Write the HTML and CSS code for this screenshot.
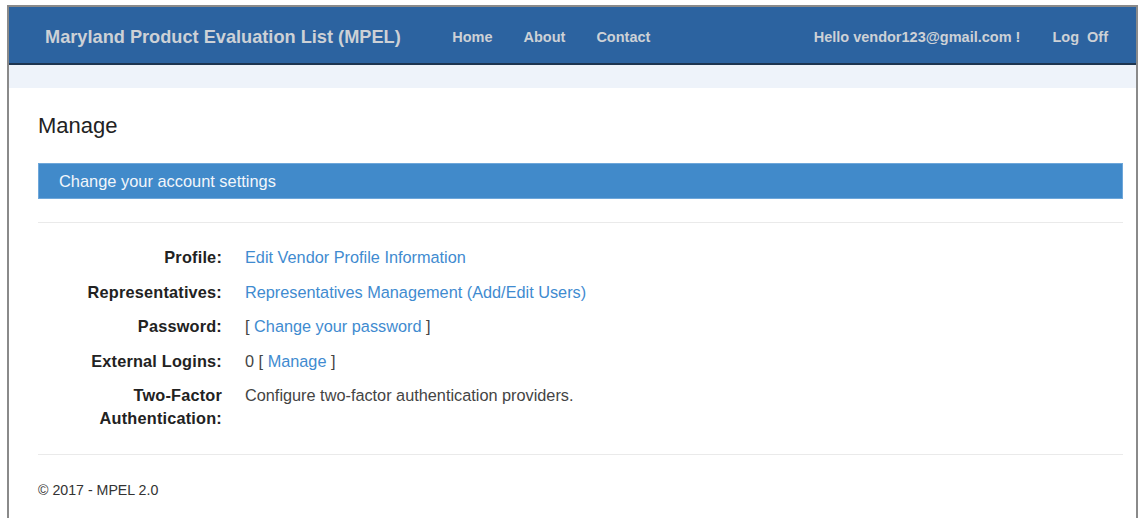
FILE: index.html
```html
<!DOCTYPE html>
<html lang="en">
<head>
<meta charset="utf-8">
<title>Manage - Maryland Product Evaluation List (MPEL)</title>
<link rel="stylesheet" href="styles.css">
</head>
<body>
<div class="window">
  <header class="navbar">
    <a class="brand" href="#">Maryland Product Evaluation List (MPEL)</a>
    <nav class="nav-main">
      <a href="#">Home</a>
      <a href="#">About</a>
      <a href="#">Contact</a>
    </nav>
    <nav class="nav-user">
      <a href="#">Hello vendor123@gmail.com !</a>
      <a href="#">Log&nbsp;&nbsp;Off</a>
    </nav>
  </header>
  <div class="subbar"></div>

  <main class="content">
    <h2 class="page-title">Manage</h2>
    <div class="banner">Change your account settings</div>
    <hr class="rule">

    <dl class="settings">
      <dt>Profile:</dt>
      <dd><a href="#">Edit Vendor Profile Information</a></dd>

      <dt>Representatives:</dt>
      <dd><a href="#">Representatives Management (Add/Edit Users)</a></dd>

      <dt>Password:</dt>
      <dd>[ <a href="#">Change your password</a> ]</dd>

      <dt>External Logins:</dt>
      <dd>0 [ <a href="#">Manage</a> ]</dd>

      <dt>Two-Factor<br>Authentication:</dt>
      <dd>Configure two-factor authentication providers.</dd>
    </dl>

    <hr class="rule">
    <footer class="footer">&copy; 2017 - MPEL 2.0</footer>
  </main>
</div>
</body>
</html>
```

FILE: styles.css
```css
html, body {
  margin: 0;
  padding: 0;
  background: #ffffff;
}

body {
  font-family: "Liberation Sans", Arial, sans-serif;
  color: #333333;
}

a {
  text-decoration: none;
}

/* window frame around the page */
.window {
  margin: 5px 0 0 7px;
  border: 2px solid #8a8a8a;
  border-bottom: none;
  min-height: 520px;
  box-sizing: border-box;
}

/* top navigation */
.navbar {
  display: flex;
  align-items: center;
  height: 52px;
  padding: 4px 28px 0 36px;
  background: #2c63a0;
  border-bottom: 2px solid #1d3550;
}

.navbar a {
  color: #cdd1d6;
  font-weight: bold;
}

.brand {
  font-size: 18.2px;
  margin-right: 36px;
}

.nav-main,
.nav-user {
  display: flex;
  font-size: 14.5px;
}

.nav-main a {
  padding: 0 15.5px;
}

.nav-user {
  margin-left: auto;
  gap: 32px;
}

.subbar {
  height: 23px;
  background: #eef3fa;
}

/* page body */
.content {
  padding: 23px 13px 0 29px;
}

.page-title {
  margin: 0 0 22px;
  font-size: 22px;
  line-height: 30px;
  font-weight: normal;
  color: #222222;
}

.banner {
  background: #418aca;
  border: 1px solid #6ea7da;
  color: #f2f6fb;
  font-size: 16.4px;
  line-height: 34px;
  padding: 0 20px;
}

.rule {
  border: 0;
  border-top: 1px solid #eaeaea;
  margin: 23px 0 0;
}

.settings {
  display: grid;
  grid-template-columns: 184px 1fr;
  column-gap: 23px;
  row-gap: 11.5px;
  margin: 23px 0 24px;
  font-size: 16.3px;
  line-height: 23px;
}

.settings dt {
  text-align: right;
  font-weight: bold;
  letter-spacing: 0.2px;
  color: #222222;
}

.settings dd {
  margin: 0;
  color: #444444;
}

.settings a {
  color: #3f8bd0;
}

.footer {
  margin-top: 24px;
  font-size: 14.2px;
  line-height: 23px;
  color: #333333;
}
```
